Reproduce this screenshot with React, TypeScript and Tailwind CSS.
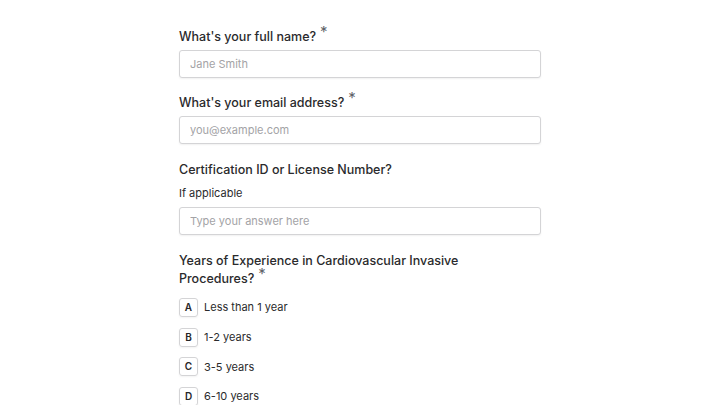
import React from 'react';

const Req: React.FC = () => (
  <span className="relative -top-[4px] ml-[4px] text-[15px] leading-none font-normal text-[#606368]">*</span>
);

const Label: React.FC<{ children: React.ReactNode; required?: boolean }> = ({ children, required }) => (
  <div className="text-[12.5px] leading-[18px] font-medium text-[#2a2a2c]">
    {children}
    {required && <Req />}
  </div>
);

const TextInput: React.FC<{ placeholder: string }> = ({ placeholder }) => (
  <input
    placeholder={placeholder}
    className="block w-full h-[28px] rounded-[3px] border border-[#d4d4d6] bg-white px-[10px] text-[11px] text-[#262627] placeholder:text-[#a3a3a6] shadow-[0_1px_2px_rgba(0,0,0,0.06)] outline-none"
  />
);

export default function App() {
  const options = [
    { key: 'A', label: 'Less than 1 year' },
    { key: 'B', label: '1-2 years' },
    { key: 'C', label: '3-5 years' },
    { key: 'D', label: '6-10 years' },
  ];

  return (
    <div className="min-h-[405px] bg-white font-['Inter',sans-serif] overflow-hidden">
      <div className="ml-[179px] w-[362px] pt-[28px] flex flex-col">
        {/* Full name */}
        <Label required>What's your full name?</Label>
        <div className="mt-[4px]">
          <TextInput placeholder="Jane Smith" />
        </div>

        {/* Email */}
        <div className="mt-[16px]">
          <Label required>What's your email address?</Label>
        </div>
        <div className="mt-[4px]">
          <TextInput placeholder="you@example.com" />
        </div>

        {/* Certification */}
        <div className="mt-[17px]">
          <Label>Certification ID or License Number?</Label>
        </div>
        <div className="mt-[5px] text-[11px] leading-[18px] text-[#2a2a2c]">If applicable</div>
        <div className="mt-[5px]">
          <TextInput placeholder="Type your answer here" />
        </div>

        {/* Experience */}
        <div className="mt-[17px] w-[290px]">
          <Label required>Years of Experience in Cardiovascular Invasive Procedures?</Label>
        </div>
        <div className="mt-[10px] flex flex-col gap-[10.7px]">
          {options.map((o) => (
            <div key={o.key} className="flex items-center gap-[6px]">
              <div className="w-[19px] h-[19px] rounded-[3px] border border-[#d4d4d6] flex items-center justify-center text-[10px] font-semibold text-[#262627] shadow-[0_1px_2px_rgba(0,0,0,0.05)]">
                {o.key}
              </div>
              <span className="text-[11px] text-[#2a2a2c]">{o.label}</span>
            </div>
          ))}
        </div>
      </div>
    </div>
  );
}
